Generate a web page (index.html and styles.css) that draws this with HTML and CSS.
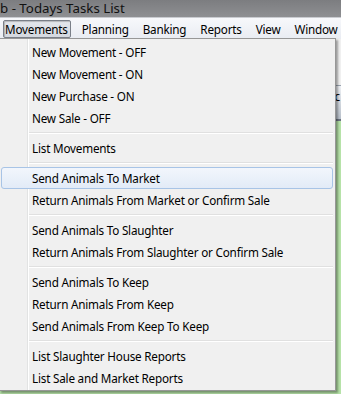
FILE: index.html
```html
<!DOCTYPE html>
<html lang="en">
<head>
  <meta charset="UTF-8" />
  <title>Todays Tasks List</title>
  <link rel="stylesheet" href="styles.css">
</head>
<body>
  <div class="window">
    <div class="titlebar">b - Todays Tasks List</div>
    <div class="menubar">
      <span class="top-item open">Movements</span>
      <span class="top-item">Planning</span>
      <span class="top-item">Banking</span>
      <span class="top-item">Reports</span>
      <span class="top-item">View</span>
      <span class="top-item">Window</span>
    </div>
    <div class="content">
      <div class="pane-top"></div>
      <div class="pane-head">c</div>
      <div class="pane-green"></div>
    </div>

    <div class="dropdown">
      <div class="item">New Movement - OFF</div>
      <div class="item">New Movement - ON</div>
      <div class="item">New Purchase - ON</div>
      <div class="item">New Sale - OFF</div>
      <div class="sep"></div>
      <div class="item">List Movements</div>
      <div class="sep"></div>
      <div class="item hover">Send Animals To Market</div>
      <div class="item">Return Animals From Market or Confirm Sale</div>
      <div class="sep"></div>
      <div class="item">Send Animals To Slaughter</div>
      <div class="item">Return Animals From Slaughter or Confirm Sale</div>
      <div class="sep"></div>
      <div class="item">Send Animals To Keep</div>
      <div class="item">Return Animals From Keep</div>
      <div class="item">Send Animals From Keep To Keep</div>
      <div class="sep"></div>
      <div class="item">List Slaughter House Reports</div>
      <div class="item">List Sale and Market Reports</div>
    </div>
  </div>
</body>
</html>
```

FILE: styles.css
```css
body {
  margin: 0;
  font-family: "Noto Sans", "Open Sans", sans-serif;
  font-size: 11.7px;
  letter-spacing: -0.2px;
  color: #000;
  background: #f0f0f0;
}
.window {
  position: relative;
  width: 341px;
  height: 394px;
  overflow: hidden;
}
.titlebar {
  height: 17px;
  line-height: 16px;
  font-size: 13.3px;
  letter-spacing: 0;
  background: linear-gradient(#7c7d80, #8e8f92);
  color: #111;
  white-space: nowrap;
}
.menubar {
  height: 21px;
  display: flex;
  align-items: center;
  padding-left: 3px;
  background: linear-gradient(#f7f8fb, #e9ecf2);
  border-top: 1px solid #c9cbd0;
  white-space: nowrap;
}
.top-item {
  padding: 0 2px 0 1px;
  margin-right: 9px;
  line-height: 16px;
  border: 1px solid transparent;
}
.top-item.open {
  background: linear-gradient(#e4e7ec, #d4d8df);
  border-color: #7a7f88;
  border-radius: 2px;
  box-shadow: inset 1px 1px 1px rgba(0,0,0,0.2);
}
.content {
  height: 355px;
  background: #f0f0f0;
}
.pane-top {
  height: 46px;
}
.pane-head {
  height: 33px;
  background: linear-gradient(#eef0f4, #b8c0ca);
  border-top: 1px solid #9aa4b0;
  border-bottom: 2px solid #6c7480;
  text-align: right;
  line-height: 20px;
  padding-right: 1px;
}
.pane-green {
  height: 280px;
  background: #b6e2a8;
}
.dropdown {
  position: absolute;
  left: -1px;
  top: 38px;
  width: 337px;
  padding: 2px 0 1px 1px;
  box-sizing: border-box;
  background: #f0f0f0 linear-gradient(90deg, transparent 27px, #e2e3e3 27px, #e2e3e3 28px, #fff 28px, #fff 29px, transparent 29px);
  border: 1px solid #979797;
  box-shadow: 2px 2px 2px rgba(0,0,0,0.35);
}
.item {
  height: 22px;
  line-height: 21px;
  padding-left: 30px;
  margin-right: 2px;
  white-space: nowrap;
  border: 1px solid transparent;
  box-sizing: border-box;
  border-radius: 3px;
}
.item.hover {
  background: linear-gradient(#f2f6fc, #e2ebf7);
  border-color: #a8c4e6;
}
.sep {
  height: 8px;
  margin-left: 28px;
  margin-right: 2px;
  background: linear-gradient(transparent 3px, #e0e0e0 3px, #e0e0e0 4px, #fff 4px, #fff 5px, transparent 5px);
}
```
